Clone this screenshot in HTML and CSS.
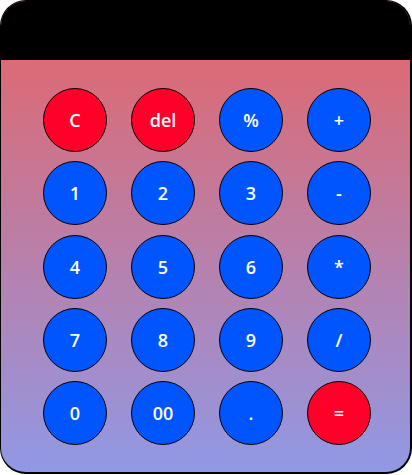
FILE: index.html
```html
<!DOCTYPE html>
<html>
<head>
<meta charset="utf-8">
<link rel="stylesheet" href="styles.css">
</head>
<body>
<div class="calc">
  <div class="display"></div>
  <div class="keys">
    <button class="key red">C</button>
    <button class="key red">del</button>
    <button class="key">%</button>
    <button class="key">+</button>
    <button class="key">1</button>
    <button class="key">2</button>
    <button class="key">3</button>
    <button class="key">-</button>
    <button class="key">4</button>
    <button class="key">5</button>
    <button class="key">6</button>
    <button class="key">*</button>
    <button class="key">7</button>
    <button class="key">8</button>
    <button class="key">9</button>
    <button class="key">/</button>
    <button class="key">0</button>
    <button class="key">00</button>
    <button class="key">.</button>
    <button class="key red">=</button>
  </div>
</div>
</body>
</html>
```
FILE: styles.css
```css
html, body {
  margin: 0;
  padding: 0;
  background: #fff;
}
.calc {
  box-sizing: border-box;
  width: 412px;
  height: 474px;
  border: 1px solid #000;
  border-right-width: 2px;
  border-bottom-width: 2px;
  border-radius: 26px;
  overflow: hidden;
  background: linear-gradient(#e66465, #9198e5);
  display: flex;
  flex-direction: column;
}
.display {
  height: 59px;
  background: #000;
  flex: none;
}
.keys {
  display: grid;
  grid-template-columns: repeat(4, 64px);
  grid-auto-rows: 64px;
  column-gap: 24px;
  row-gap: 9.3px;
  padding: 28px 0 0 42px;
}
.key {
  box-sizing: border-box;
  width: 64px;
  height: 64px;
  margin: 0;
  padding: 0;
  border: 1px solid #000;
  border-radius: 50%;
  background: #0055ff;
  color: #fff;
  font-family: "Open Sans", sans-serif;
  font-weight: 600;
  font-size: 18px;
  line-height: 1;
}
.key.red {
  background: #ff0029;
}
```
